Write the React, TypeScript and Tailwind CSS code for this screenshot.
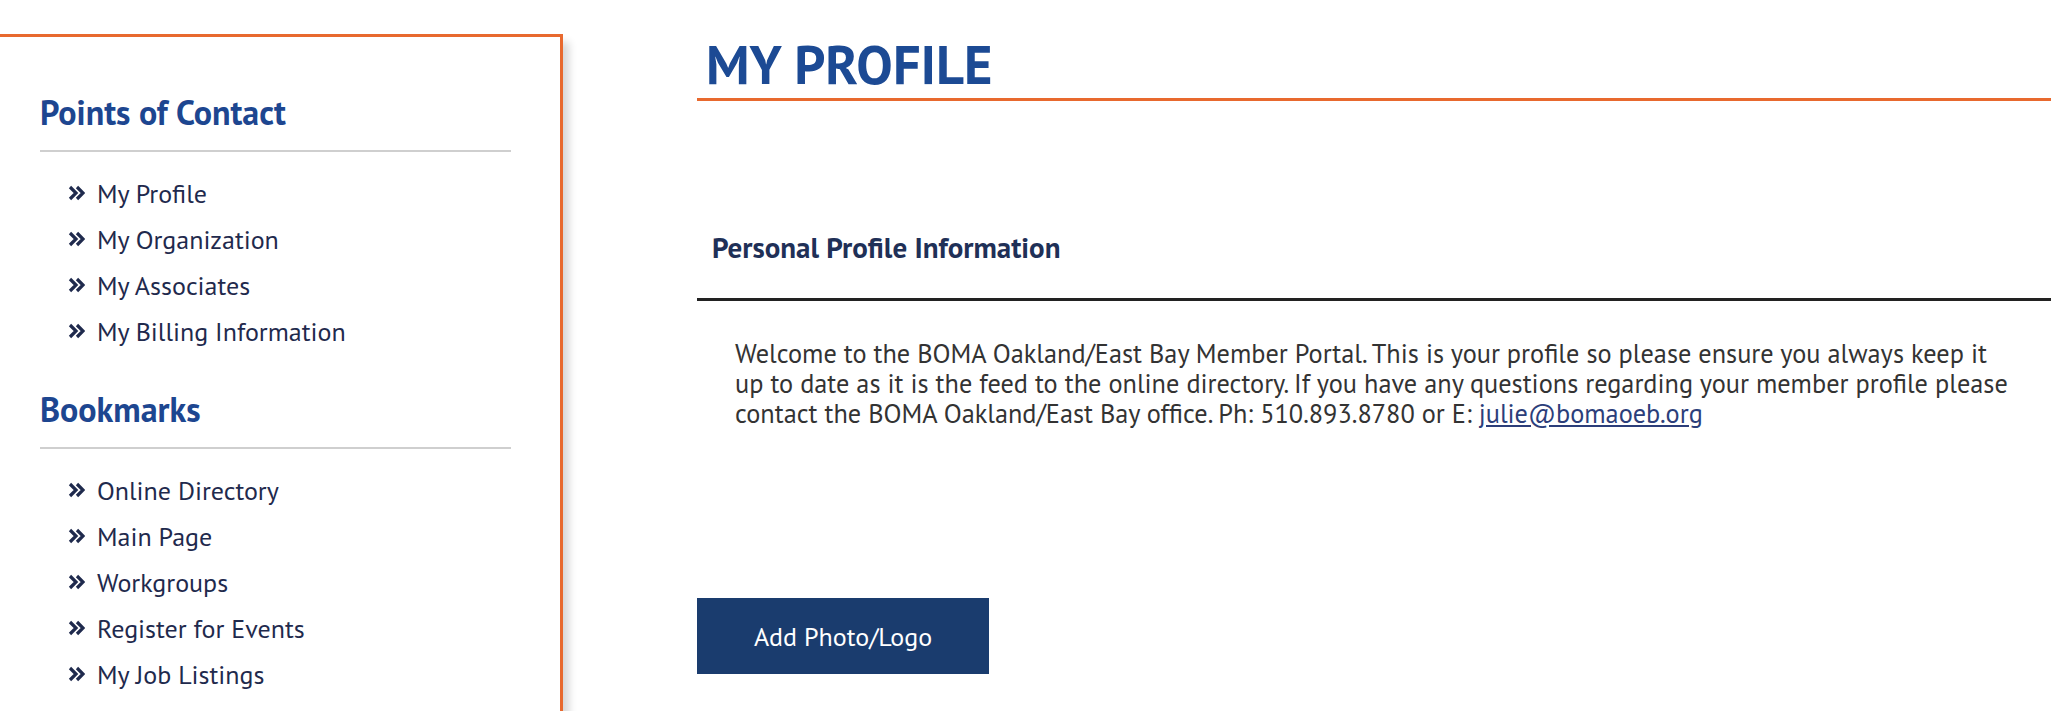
import type { ReactNode } from "react";

const contactLinks = ["My Profile", "My Organization", "My Associates", "My Billing Information"];
const bookmarkLinks = ["Online Directory", "Main Page", "Workgroups", "Register for Events", "My Job Listings"];

export default function App() {
  return (
    <div className="flex min-h-[711px] w-full overflow-hidden bg-white font-['PT_Sans',Lato,sans-serif]">
      <Sidebar />
      <main className="ml-[134px] flex-1">
        <h1 className="mt-[34px] border-b-[3px] border-[#e8692e] pb-[4px] pl-[9px] text-[54.5px] font-bold leading-[60px] text-[#1c4a94]">
          MY PROFILE
        </h1>

        <div className="mt-[128px] border-b-[3px] border-[#222] pb-[33px] pl-[15px]">
          <h2 className="text-[29px] font-bold leading-[36px] text-[#1f3057]">Personal Profile Information</h2>
        </div>

        <p className="mt-[37px] whitespace-nowrap pl-[38px] text-[26.3px] leading-[30px] text-[#333]">
          Welcome to the BOMA Oakland/East Bay Member Portal. This is your profile so please ensure you always keep it
          <br />
          up to date as it is the feed to the online directory. If you have any questions regarding your member profile please
          <br />
          contact the BOMA Oakland/East Bay office. Ph: 510.893.8780 or E:{" "}
          <a href="#" className="text-[#2c3e7a] underline underline-offset-2">
            julie@bomaoeb.org
          </a>
        </p>

        <button className="mt-[170px] flex h-[76px] w-[292px] items-center justify-center bg-[#1a3c6e] text-[26px] text-white">
          Add Photo/Logo
        </button>
      </main>
    </div>
  );
}

function Sidebar() {
  return (
    <div className="shrink-0 pt-[34px]">
      <aside className="h-[700px] w-[563px] border-r-[3px] border-t-[3px] border-[#e8692e] bg-white pl-[40px] pr-[49px] pt-[55px] shadow-[8px_6px_8px_-2px_rgba(0,0,0,0.16)]">
        <Section title="Points of Contact">
          {contactLinks.map((l) => (
            <NavItem key={l}>{l}</NavItem>
          ))}
        </Section>
        <div className="mt-[35px]">
          <Section title="Bookmarks">
            {bookmarkLinks.map((l) => (
              <NavItem key={l}>{l}</NavItem>
            ))}
          </Section>
        </div>
      </aside>
    </div>
  );
}

function Section({ title, children }: { title: string; children: ReactNode }) {
  return (
    <div>
      <h3 className="text-[34px] font-bold leading-[40px] text-[#1d4690]">{title}</h3>
      <div className="mt-[18px] h-[2px] bg-[#cfcfcf]" />
      <ul className="mt-[18px]">{children}</ul>
    </div>
  );
}

function NavItem({ children }: { children: ReactNode }) {
  return (
    <li className="flex h-[46px] items-center pl-[28px] text-[26px] text-[#1f2a4d]">
      <svg width="17" height="16" viewBox="0 0 17 16" className="mr-[12px] shrink-0">
        <path d="M2 2 L8 8 L2 14 M9 2 L15 8 L9 14" fill="none" stroke="#1f2a4d" strokeWidth="3.2" />
      </svg>
      <a href="#">{children}</a>
    </li>
  );
}
